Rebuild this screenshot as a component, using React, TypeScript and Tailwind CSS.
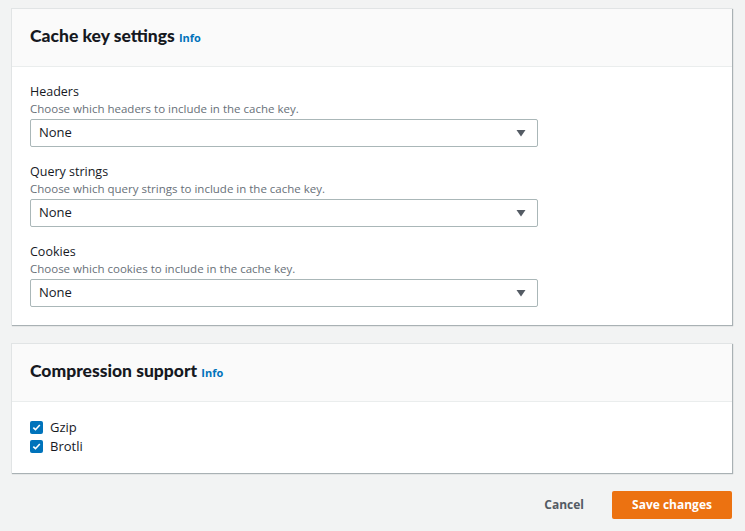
import React from "react";

const font = { fontFamily: '"Open Sans", "Noto Sans", Arial, sans-serif' };
const titleFont = { fontFamily: 'Lato, "Open Sans", Arial, sans-serif' };

function Caret() {
  return (
    <svg width="10" height="7" viewBox="0 0 10 7" className="shrink-0">
      <path d="M0.5 0 H9.5 L5 6.5 Z" fill="#545b64" />
    </svg>
  );
}

function Field({ label, desc }: { label: string; desc: string }) {
  return (
    <div>
      <p className="text-[12.5px] leading-[18px] text-[#16191f]">{label}</p>
      <p className="text-[11.5px] leading-[16px] text-[#687078]">{desc}</p>
      <div className="mt-[2px] w-[508px] h-[28px] border border-[#aab7b8] rounded-[2px] bg-white flex items-center justify-between pl-[8px] pr-[11px]">
        <span className="text-[13px] text-[#16191f]">None</span>
        <Caret />
      </div>
    </div>
  );
}

function Check({ label }: { label: string }) {
  return (
    <label className="flex items-center gap-[7px] h-[19px]">
      <span className="w-[13px] h-[13px] rounded-[2px] bg-[#0073bb] flex items-center justify-center">
        <svg width="9" height="9" viewBox="0 0 9 9">
          <path d="M1.3 4.6 L3.5 6.7 L7.8 2" fill="none" stroke="white" strokeWidth="1.6" />
        </svg>
      </span>
      <span className="text-[13px] text-[#16191f]">{label}</span>
    </label>
  );
}

function Card({ title, children }: { title: string; children: React.ReactNode }) {
  return (
    <div className="bg-white border-t border-l border-[#e1e4e5] shadow-[1px_1px_1px_0_rgba(0,28,36,0.3)] w-[721px]">
      <div className="h-[58px] bg-[#fafafa] border-b border-[#eaeded] flex items-center px-[18px]">
        <h2 style={titleFont} className="text-[17.5px] font-black text-[#16191f] -mt-[2px]">
          {title}{" "}
          <span style={font} className="text-[11px] font-bold text-[#0073bb]">Info</span>
        </h2>
      </div>
      {children}
    </div>
  );
}

export default function App() {
  return (
    <div style={font} className="w-[745px] h-[531px] bg-[#f2f3f3] pt-[8px] pl-[11px] overflow-hidden">
      <Card title="Cache key settings">
        <div className="pt-[16px] pb-[18px] px-[18px] flex flex-col gap-[16px]">
          <Field label="Headers" desc="Choose which headers to include in the cache key." />
          <Field label="Query strings" desc="Choose which query strings to include in the cache key." />
          <Field label="Cookies" desc="Choose which cookies to include in the cache key." />
        </div>
      </Card>
      <div className="h-[18px]" />
      <Card title="Compression support">
        <div className="pt-[16px] pb-[17px] px-[18px] flex flex-col">
          <Check label="Gzip" />
          <Check label="Brotli" />
        </div>
      </Card>
      <div className="w-[721px] flex justify-end items-center mt-[18px] gap-[8px]">
        <button className="h-[28px] px-[20px] text-[12px] font-bold text-[#545b64]">Cancel</button>
        <button className="h-[28px] w-[120px] rounded-[2px] bg-[#ec7211] text-[12px] font-bold text-white">
          Save changes
        </button>
      </div>
    </div>
  );
}
